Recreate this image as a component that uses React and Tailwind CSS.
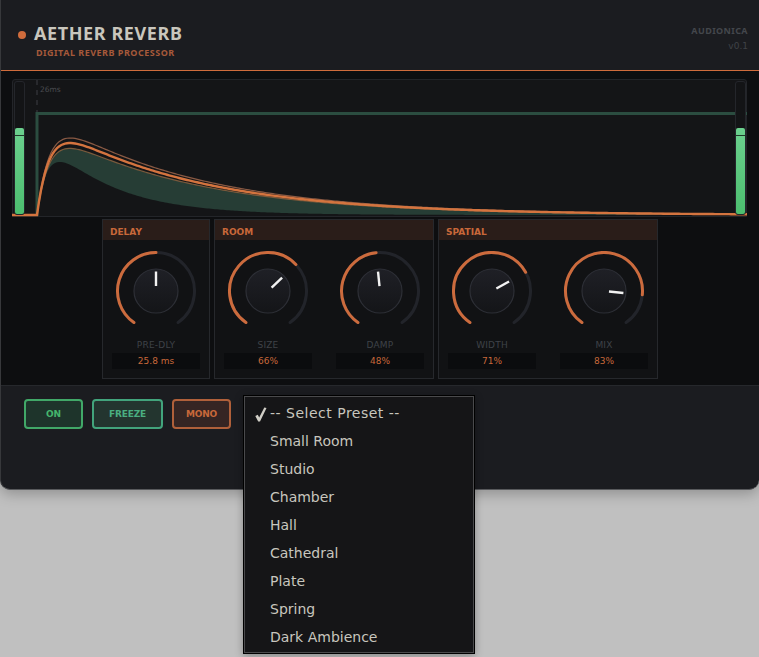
const FONT = "font-['DejaVu_Sans',sans-serif]";

function curve(A, a, b, x0 = 37) {
  const pts = ["M12 215", `L${x0 - 1} 215`];
  for (let x = x0; x <= 747; x += 2) {
    const t = x - x0;
    const h = A * (1 - Math.exp(-t / a)) * Math.exp(-t / b);
    pts.push(`L${x} ${(215 - h).toFixed(2)}`);
  }
  return pts;
}

function Chart() {
  const top = curve(105, 13.3, 148);
  const main = curve(98.6, 13.3, 145);
  const low = curve(91.5, 13.3, 143);
  const bottom = curve(90, 12.5, 65);
  const fillPath = "M" + low.slice(1).join(" ").slice(1) + " " + bottom.slice(1).reverse().join(" ") + " Z";
  const seg = (p) => p.join(" ");
  return (
    <svg className="absolute left-[-13px] top-[-80px]" width="759" height="220" viewBox="0 0 759 220">
      <path d={fillPath} fill="#263d35" />
      <path d="M37 80V216" stroke="#3c3f44" strokeWidth="1" strokeDasharray="5 5" fill="none" />
      <path d="M37 216V113.5H747" stroke="#2b4d40" strokeWidth="3" fill="none" />
      <path d={seg(top)} stroke="#8a5a44" strokeWidth="1.2" fill="none" />
      <path d={seg(low)} stroke="#7a5a3c" strokeWidth="1.2" fill="none" />
      <path d={seg(main)} stroke="#d4743f" strokeWidth="2.4" fill="none" />
    </svg>
  );
}

function Meter({ side }) {
  return (
    <div className={`absolute top-px bottom-px w-[11px] rounded-[3px] border border-[#24262b] bg-[#131416] ${side}`}>
      <div className="absolute inset-x-0 bottom-0 top-[46px] rounded-[2px] bg-gradient-to-b from-[#6bd08e] to-[#4cbe6f]">
        <div className="mt-[7px] h-px bg-[#1f3b2a]" />
      </div>
    </div>
  );
}

function polar(r, deg) {
  const a = ((deg - 90) * Math.PI) / 180;
  return [40 + r * Math.cos(a), 40 + r * Math.sin(a)];
}

function arc(r, from, to) {
  const [x1, y1] = polar(r, from);
  const [x2, y2] = polar(r, to);
  return `M${x1.toFixed(2)} ${y1.toFixed(2)}A${r} ${r} 0 ${to - from > 180 ? 1 : 0} 1 ${x2.toFixed(2)} ${y2.toFixed(2)}`;
}

function Knob({ label, value, pct }) {
  const deg = -145 + pct * 2.9;
  const [px1, py1] = polar(5, deg);
  const [px2, py2] = polar(19.5, deg);
  return (
    <div className="flex w-[106px] flex-col items-center pt-[11px]">
      <svg width="84" height="80" viewBox="-2 0 84 80">
        <defs>
          <linearGradient id="knobFill" x1="0" y1="0" x2="0" y2="1">
            <stop offset="0" stopColor="#1f2026" />
            <stop offset="1" stopColor="#141518" />
          </linearGradient>
        </defs>
        <path d={arc(38.5, -145, 145)} stroke="#22242a" strokeWidth="3" strokeLinecap="round" fill="none" />
        <path d={arc(38.5, -145, deg)} stroke="#cc6b3d" strokeWidth="3" strokeLinecap="round" fill="none" />
        <circle cx="40" cy="40" r="22" fill="url(#knobFill)" stroke="#2d2f36" strokeWidth="1.2" />
        <line x1={px1} y1={py1} x2={px2} y2={py2} stroke="#f2f2f2" strokeWidth="2.4" />
      </svg>
      <div className="mt-[9px] text-[9px] leading-[11px] tracking-[0.2px] text-[#3f4248]">{label}</div>
      <div className="mt-[2px] h-[16px] w-[88px] bg-[#0b0c0e] text-center text-[9px] leading-[16px] text-[#c8683a]">{value}</div>
    </div>
  );
}

function Section({ title, children }) {
  return (
    <section className="h-[160px] border border-[#26282c] bg-[#111214]">
      <h2 className="h-[20px] bg-[#2a1d19] pl-[7px] text-[9px] font-bold leading-[24px] text-[#c8683a]">{title}</h2>
      <div className="flex gap-[6px]">{children}</div>
    </section>
  );
}

function Btn({ children, cls }) {
  return (
    <button className={`h-[30px] rounded-[4px] border-2 pt-[1px] text-[9px] font-bold tracking-[-0.2px] ${cls}`}>{children}</button>
  );
}

const PRESETS = ["Small Room", "Studio", "Chamber", "Hall", "Cathedral", "Plate", "Spring", "Dark Ambience"];

export default function App() {
  return (
    <div className={`relative h-[657px] w-[759px] overflow-hidden bg-[#c0c0c0] ${FONT}`}>
      <div className="h-[490px] w-[759px] overflow-hidden rounded-b-[10px] border-l border-b border-l-[#37383b] border-b-[#58595c] bg-[#1b1c20] shadow-[0_4px_14px_rgba(0,0,0,0.25)]">
        <header className="flex h-[70px] items-start justify-between pl-[17px] pr-[11px]">
          <div className="flex items-start">
            <div className="mt-[31px] h-2 w-2 rounded-full bg-[#d06c3c]" />
            <div className="ml-[8px] mt-[21px]">
              <h1 className="font-['Noto_Sans',sans-serif] text-[18px] font-bold leading-[24px] tracking-[0.6px] text-[#c9c6bd]">AETHER REVERB</h1>
              <p className="ml-[2px] mt-[2px] font-['Noto_Sans',sans-serif] text-[9px] font-bold leading-[11px] tracking-[0.5px] text-[#a6593a]">DIGITAL REVERB PROCESSOR</p>
            </div>
          </div>
          <div className="mt-[25px] text-right text-[9px] leading-[11px]">
            <div className="font-['Noto_Sans',sans-serif] font-bold tracking-[0.4px] text-[#44474c]">AUDIONICA</div>
            <div className="mt-[5px] text-[#3f4247]">v0.1</div>
          </div>
        </header>
        <main className="h-[315px] border-t border-t-[#d06c3c] bg-[#0d0e10] pt-[8px]">
          <div className="relative ml-[11px] h-[138px] w-[735px] rounded-t-[3px] border border-[#232529] bg-[#141517]">
            <Chart />
            <span className="absolute left-[27px] top-[5px] text-[7.5px] leading-[10px] text-[#4a4c50]">26ms</span>
            <Meter side="left-px" />
            <Meter side="right-0" />
          </div>
          <div className="ml-[101px] mt-[2px] flex gap-[4px]">
            <Section title="DELAY">
              <Knob label="PRE-DLY" value="25.8 ms" pct={50} />
            </Section>
            <Section title="ROOM">
              <Knob label="SIZE" value="66%" pct={66} />
              <Knob label="DAMP" value="48%" pct={48} />
            </Section>
            <Section title="SPATIAL">
              <Knob label="WIDTH" value="71%" pct={71} />
              <Knob label="MIX" value="83%" pct={83} />
            </Section>
          </div>
        </main>
        <footer className="flex gap-[9px] border-t border-t-[#26282c] pl-[23px] pt-[13px]">
          <Btn cls="w-[59px] border-[#41a868] bg-[#1e342b] text-[#45b66d]">ON</Btn>
          <Btn cls="w-[71px] border-[#42a47c] bg-[#23352f] text-[#4aae81]">FREEZE</Btn>
          <Btn cls="w-[59px] border-[#b0603a] bg-[#352523] text-[#c8683a]">MONO</Btn>
        </footer>
      </div>
      <ul className="absolute left-[243px] top-[395px] h-[259px] w-[232px] border border-black bg-[#151517] py-[3px] pl-[1px] text-[14px] leading-[28px] text-[#c8c6be] shadow-[inset_0_0_0_1px_#4a4a4c,0_2px_8px_rgba(0,0,0,0.3)]">
        <li className="relative pl-[25px] tracking-[0.5px]">
          <svg className="absolute left-[10px] top-[8px]" width="12" height="15" viewBox="0 0 12 15">
            <path d="M0.3 9L2.8 7.8L4.2 10.5L9.3 0.5L11.5 1L5 14.5H3.2Z" fill="#d0cec6" />
          </svg>
          -- Select Preset --
        </li>
        {PRESETS.map((p) => (
          <li key={p} className="pl-[25px]">{p}</li>
        ))}
      </ul>
    </div>
  );
}
